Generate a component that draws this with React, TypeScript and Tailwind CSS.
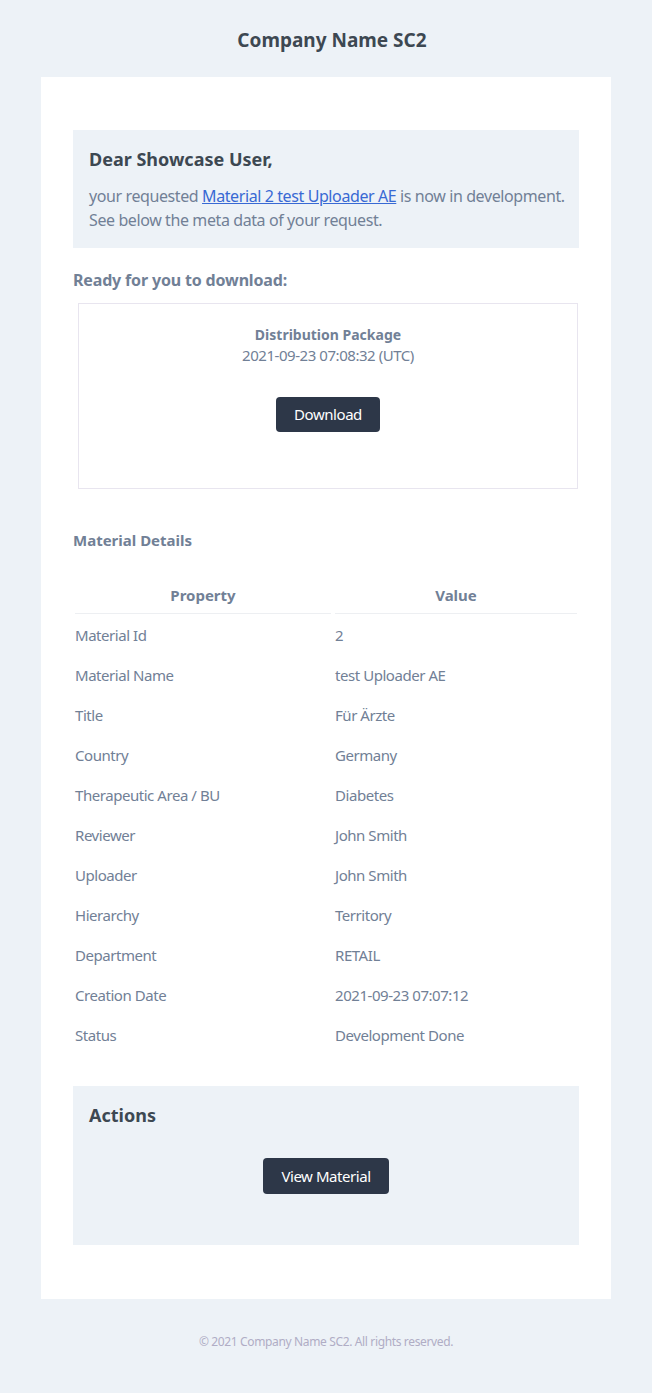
const rows: [string, string][] = [
  ["Material Id", "2"],
  ["Material Name", "test Uploader AE"],
  ["Title", "Für Ärzte"],
  ["Country", "Germany"],
  ["Therapeutic Area / BU", "Diabetes"],
  ["Reviewer", "John Smith"],
  ["Uploader", "John Smith"],
  ["Hierarchy", "Territory"],
  ["Department", "RETAIL"],
  ["Creation Date", "2021-09-23 07:07:12"],
  ["Status", "Development Done"],
];

export default function App() {
  return (
    <div className="min-h-[1393px] bg-[#edf2f7] text-[#718096] font-['Noto_Sans',sans-serif]">
      {/* Header */}
      <div className="h-[77px] flex items-center justify-center pt-[4px] pl-[12px]">
        <span className="text-[19px] font-bold text-[#3d4852]">Company Name SC2</span>
      </div>

      {/* Card */}
      <div className="mx-auto w-[570px] bg-white px-8 pt-[53px] pb-[54px]">
        <div className="bg-[#edf2f7] px-4 pt-4 pb-4">
          <h1 className="text-[18px] font-bold text-[#3d4852] leading-[26px]">Dear Showcase User,</h1>
          <p className="mt-[12px] text-[16px] leading-[24px] tracking-[-0.025em] whitespace-nowrap">
            your requested{" "}
            <a href="#" className="text-[#3869d4] underline">Material 2 test Uploader AE</a> is now in development.
            <br />
            See below the meta data of your request.
          </p>
        </div>

        <p className="mt-[20px] text-[16px] leading-[24px] font-bold tracking-[-0.01em]">Ready for you to download:</p>

        <div className="mt-[11px] ml-[5px] mr-[1px] h-[186px] border border-[#e8e5ef] flex flex-col items-center pt-[21px]">
          <div className="text-[14px] font-bold leading-[20px]">Distribution Package</div>
          <div className="text-[15px] leading-[20px] tracking-[-0.03em]">2021-09-23 07:08:32 (UTC)</div>
          <button className="mt-[32px] h-[35px] px-[18px] rounded bg-[#2d3748] text-white text-[15px] tracking-[-0.03em]">Download</button>
        </div>

        <p className="mt-[40px] text-[15px] leading-[22px] font-bold">Material Details</p>

        <div className="mt-[26px] grid grid-cols-[256px_1fr] gap-x-1 px-[2px] text-[15px] tracking-[-0.03em]">
          <div className="h-[37px] flex items-center justify-center font-bold tracking-normal border-b border-[#edeff2]">Property</div>
          <div className="h-[37px] flex items-center justify-center font-bold tracking-normal border-b border-[#edeff2]">Value</div>
          {rows.map(([k, v]) => (
            <div key={k} className="contents">
              <div className="h-[40px] flex items-center pt-[3px]">{k}</div>
              <div className="h-[40px] flex items-center pt-[3px]">{v}</div>
            </div>
          ))}
        </div>

        <div className="mt-[32px] h-[159px] bg-[#edf2f7] px-4 pt-[16px] flex flex-col">
          <h2 className="text-[18px] font-bold text-[#3d4852] leading-[26px]">Actions</h2>
          <div className="flex justify-center mt-[30px]">
            <button className="h-[36px] px-[18px] rounded bg-[#2d3748] text-white text-[15px] tracking-[-0.03em]">View Material</button>
          </div>
        </div>
      </div>

      {/* Footer */}
      <div className="h-[84px] flex items-center justify-center pt-[2px]">
        <span className="text-[12px] text-[#b0adc5] tracking-[-0.03em]">© 2021 Company Name SC2. All rights reserved.</span>
      </div>
    </div>
  );
}
